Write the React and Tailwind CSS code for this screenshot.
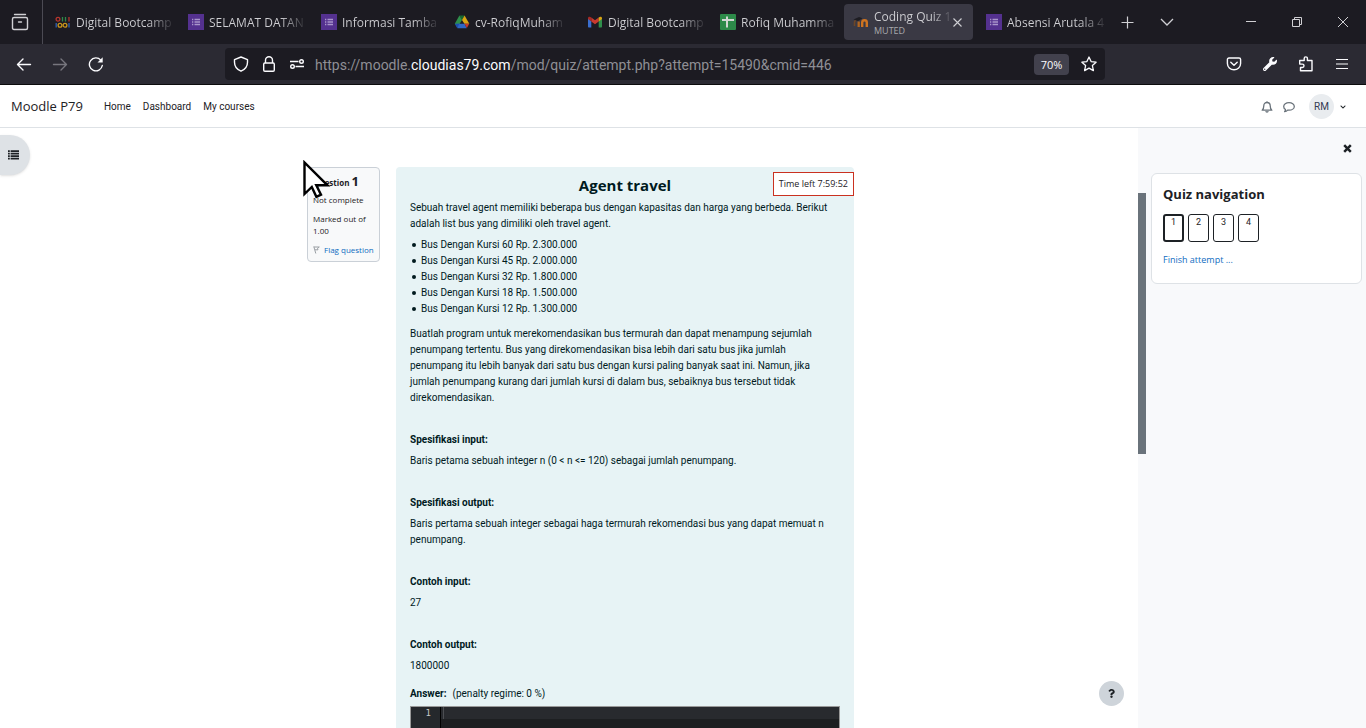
import React from "react";
import { FaWrench, FaQuestion, FaChevronDown } from "react-icons/fa";

const FormsIcon = () => (
  <svg width="16" height="16" viewBox="0 0 16 16" className="shrink-0">
    <rect width="16" height="16" fill="#54318f" />
    <path d="M6.500 5.500H12M6.500 8H12M6.500 10.500H12" stroke="#a995cb" strokeWidth="1.300" />
    <path d="M4 5.500h1.300M4 8h1.300M4 10.500h1.300" stroke="#a995cb" strokeWidth="1.300" />
  </svg>
);

const BootcampIcon = () => (
  <svg width="16" height="16" viewBox="0 0 16 16" fill="none" strokeWidth="1.300" className="shrink-0">
    <circle cx="3" cy="5.300" r="1.900" stroke="#b5362f" />
    <path d="M7.500 3v4.500M10.500 3v4.500" stroke="#2f8a4a" />
    <path d="M14 3v4.500" stroke="#b5362f" />
    <path d="M1.200 9v4.500" stroke="#2f62b5" />
    <circle cx="5" cy="11.200" r="1.900" stroke="#c8951c" />
    <circle cx="10" cy="11.200" r="1.900" stroke="#c8951c" />
    <path d="M14 9v4.500" stroke="#2f62b5" />
  </svg>
);

const DriveIcon = () => (
  <svg width="16" height="16" viewBox="0 0 16 16" className="shrink-0">
    <path d="M5.400 1.500h5.200L8 6z" fill="#17682f" />
    <path d="M5.400 1.500L.8 9.700l2.600 3.800L8 5.900z" fill="#2f8f4b" />
    <path d="M10.600 1.500L8 5.900l2.400 3.900h4.900z" fill="#d9a514" />
    <path d="M3.200 9.800h7.400l2.100 4.400H3.400z" fill="#2f66c4" />
    <path d="M.8 9.800h4.700l-2.400 4.300z" fill="#1c4fae" />
    <path d="M10.400 9.800h4.900l-2.400 4.300z" fill="#c2382d" />
  </svg>
);

const GmailIcon = () => (
  <svg width="16" height="16" viewBox="0 0 16 16" className="shrink-0">
    <path d="M1 4.500l3.300 2.500v6.500H2c-.6 0-1-.4-1-1z" fill="#3a6fd0" />
    <path d="M15 4.500L11.700 7v6.500H14c.6 0 1-.4 1-1z" fill="#2f8f4b" />
    <path d="M4.300 3.500L8 6.300l3.700-2.800V7.500L8 10.300 4.300 7.500z" fill="#c93a30" />
    <path d="M1 4.300C1 2.700 2.700 2.300 4.300 3.500v4L1 5z" fill="#a82a24" />
    <path d="M15 4.300c0-1.600-1.700-2-3.300-.8v4L15 5z" fill="#d9a514" />
  </svg>
);

const SheetsIcon = () => (
  <svg width="16" height="16" viewBox="0 0 16 16" className="shrink-0">
    <rect width="16" height="16" rx="1" fill="#2d8a49" />
    <path d="M2 6h12M7 2.500v11" stroke="#d2d6d3" strokeWidth="2" />
  </svg>
);

const MoodleIcon = () => (
  <svg width="16" height="16" viewBox="0 0 16 16" fill="none" className="shrink-0">
    <path d="M1.500 12V8.500c0-1.200.6-2 1.700-2" stroke="#6d4627" strokeWidth="1.600" />
    <path d="M5.700 13V7.500" stroke="#b0651f" strokeWidth="2.300" />
    <path d="M9.200 13V8.500c0-3 4.600-3 4.600 0V13" stroke="#cf7420" strokeWidth="2.400" />
    <path d="M.5 5.500L6 3l3.500 1.300L5 7z" fill="#1e1d22" />
  </svg>
);

const tabs = [
  { title: "Digital Bootcamp", Icon: BootcampIcon },
  { title: "SELAMAT DATAN", Icon: FormsIcon },
  { title: "Informasi Tamba", Icon: FormsIcon },
  { title: "cv-RofiqMuham", Icon: DriveIcon },
  { title: "Digital Bootcamp", Icon: GmailIcon },
  { title: "Rofiq Muhamma", Icon: SheetsIcon },
  { title: "Coding Quiz 1", Icon: MoodleIcon, active: true },
  { title: "Absensi Arutala 4", Icon: FormsIcon },
];

function Tab({ title, Icon, active }) {
  return (
    <div
      className={
        "flex h-9 w-[129px] shrink-0 items-center gap-[5px] rounded pl-[9px] " +
        (active ? "bg-[#3a3944] pr-[11px]" : "")
      }
    >
      <Icon />
      <button className="min-w-0 flex-1 whitespace-nowrap pt-[2px] text-left">
        <span className="block w-fit bg-linear-to-r from-[#d0d0d4] from-75% to-[#d0d0d420] bg-clip-text text-xs leading-4 text-transparent">
          {title}
        </span>
        {active && <span className="block pb-[2px] text-[9px] leading-[11px] text-[#a8a8ac]">MUTED</span>}
      </button>
      {active && (
        <button aria-label="Close tab" className="shrink-0 text-[#cfcfd4]">
          <svg width="9" height="9" viewBox="0 0 9 9" stroke="currentColor" strokeWidth="1.100">
            <path d="M.5.5l8 8M8.500.5l-8 8" />
          </svg>
        </button>
      )}
    </div>
  );
}

function TabBar() {
  return (
    <div className="flex h-11 shrink-0 items-center bg-[#1c1b22] text-[#d0d0d4]">
      <button aria-label="Recent browsing" className="flex h-11 w-[43px] shrink-0 items-center justify-center border-r border-[#4b4a53] pr-[2px]">
        <svg width="18" height="18" viewBox="0 0 18 18" fill="none" stroke="currentColor" strokeWidth="1.400">
          <path d="M3.500 1.500h11" strokeLinecap="round" />
          <path d="M3 4.500h12c1 0 1.500.5 1.500 1.500v9c0 1-.5 1.500-1.500 1.500H3c-1 0-1.500-.5-1.500-1.500V6c0-1 .5-1.500 1.500-1.500z" />
          <path d="M7.500 9h3" strokeLinecap="round" />
        </svg>
      </button>
      <div className="ml-[3px] flex gap-1">
        {tabs.map((t, i) => (
          <Tab key={i} {...t} />
        ))}
      </div>
      <button aria-label="New tab" className="ml-[11px] flex w-5 shrink-0 justify-center">
        <svg width="13" height="13" viewBox="0 0 13 13" stroke="currentColor" strokeWidth="1.200">
          <path d="M6.500.5v12M.5 6.500h12" />
        </svg>
      </button>
      <button aria-label="List all tabs" className="ml-5 flex w-5 shrink-0 justify-center">
        <svg width="14" height="14" viewBox="0 0 14 14" fill="none" stroke="currentColor" strokeWidth="1.300">
          <path d="M1 4l6 6 6-6" />
        </svg>
      </button>
      <div className="ml-auto flex items-center gap-9 pr-[18px]">
        <button aria-label="Minimize">
          <svg width="10" height="10" viewBox="0 0 10 10" stroke="currentColor"><path d="M0 4.500h10" /></svg>
        </button>
        <button aria-label="Restore">
          <svg width="10" height="10" viewBox="0 0 10 10" fill="none" stroke="currentColor"><path d="M.5 2.500h7v7h-7zM2.500 2.500v-2h7v7h-2" /></svg>
        </button>
        <button aria-label="Close window">
          <svg width="10" height="10" viewBox="0 0 10 10" stroke="currentColor"><path d="M0 0l10 10M10 0L0 10" /></svg>
        </button>
      </div>
    </div>
  );
}

function NavBar() {
  return (
    <div className="flex h-[41px] shrink-0 items-center border-b border-[#0c0c0d] bg-[#2b2a33] text-[#fbfbfe]">
      <div className="flex w-[225px] shrink-0 items-center gap-5 pl-4">
        <button aria-label="Back">
          <svg width="16" height="16" viewBox="0 0 16 16" fill="none" stroke="currentColor" strokeWidth="1.400" strokeLinecap="round" strokeLinejoin="round">
            <path d="M14.500 8.500H1.500M7 3L1.500 8.500 7 14" />
          </svg>
        </button>
        <button aria-label="Forward" className="text-[#77767e]">
          <svg width="16" height="16" viewBox="0 0 16 16" fill="none" stroke="currentColor" strokeWidth="1.400" strokeLinecap="round" strokeLinejoin="round">
            <path d="M1.500 8.500h13M9 3l5.500 5.500L9 14" />
          </svg>
        </button>
        <button aria-label="Reload">
          <svg width="16" height="16" viewBox="0 0 16 16" fill="none" stroke="currentColor" strokeWidth="1.400" strokeLinecap="round">
            <path d="M14.300 9.500A6.500 6.500 0 1 1 12.800 4.100" />
            <path d="M14.700 1.300v5.200H9.500z" fill="currentColor" stroke="none" />
          </svg>
        </button>
      </div>
      <div className="flex h-8 w-[880px] min-w-0 items-center rounded bg-[#1c1b22] pl-2 pr-2">
        <div className="flex shrink-0 items-center gap-3">
          <svg width="16" height="16" viewBox="0 0 16 16" fill="none" stroke="currentColor" strokeWidth="1.400" strokeLinejoin="round">
            <path d="M8 1l6.500 2.600v2.600c0 4-2.500 7.300-6.500 9-4-1.700-6.500-5-6.500-9V3.600z" />
          </svg>
          <svg width="16" height="16" viewBox="0 0 16 16" fill="none" stroke="currentColor" strokeWidth="1.400">
            <rect x="2.700" y="7" width="10.600" height="8.300" rx="1.200" />
            <path d="M4.500 7V4.200a3.500 3.500 0 0 1 7 0V7" />
          </svg>
          <svg width="16" height="16" viewBox="0 0 16 16" fill="none" stroke="currentColor" strokeWidth="1.400">
            <path d="M1 5.500h8.500M6.500 10.500H15" />
            <circle cx="12.500" cy="5.500" r="1.800" />
            <circle cx="3.500" cy="10.500" r="1.800" />
          </svg>
        </div>
        <div className="ml-[10px] min-w-0 flex-1 truncate pt-px font-['Roboto',sans-serif] text-sm text-[#8f8f95]">
          https://moodle.<span className="text-[#fbfbfe]">cloudias79.com</span>/mod/quiz/attempt.php?attempt=15490&amp;cmid=446
        </div>
        <button className="h-[21px] w-[35px] shrink-0 rounded-sm bg-[#42414d] text-[11px] leading-[21px]">70%</button>
        <button aria-label="Bookmark" className="ml-3 shrink-0">
          <svg width="16" height="16" viewBox="0 0 16 16" fill="none" stroke="currentColor" strokeWidth="1.300" strokeLinejoin="round">
            <path d="M8 1l2.100 4.600 5 .6-3.700 3.400 1 5L8 12.100l-4.400 2.500 1-5L.9 6.200l5-.6z" />
          </svg>
        </button>
      </div>
      <div className="ml-auto flex shrink-0 items-center gap-5 pr-4">
        <button aria-label="Save to Pocket">
          <svg width="16" height="16" viewBox="0 0 16 16" fill="none" stroke="currentColor" strokeWidth="1.400" strokeLinecap="round" strokeLinejoin="round">
            <path d="M3 2h10c1 0 1.600.6 1.600 1.600V7.500a6.600 6.300 0 0 1-13.200 0V3.600C1.400 2.600 2 2 3 2z" />
            <path d="M4.800 6.200L8 9.300l3.200-3.100" />
          </svg>
        </button>
        <button aria-label="Developer tools"><FaWrench size={14} className="mx-px" /></button>
        <button aria-label="Extensions">
          <svg width="16" height="16" viewBox="0 0 16 16" fill="none" stroke="currentColor" strokeWidth="1.400" strokeLinejoin="round">
            <path d="M2.500 14.800V11.500h1.800a1.500 1.500 0 0 0 0-3.400H1.700V4.500h4.500V2.500a1.600 1.600 0 0 1 3.200 0v2H14v10.300z" />
          </svg>
        </button>
        <button aria-label="Menu">
          <svg width="16" height="16" viewBox="0 0 16 16" stroke="currentColor" strokeWidth="1.200"><path d="M2 3.500h12M2 8h12M2 12.500h12" /></svg>
        </button>
      </div>
    </div>
  );
}

function SiteHeader() {
  return (
    <header className="flex h-[43px] shrink-0 items-center border-b border-[#dee2e6] bg-white px-[11px] pt-px text-[#1d2125]">
      <a href="#" className="font-['Open_Sans',sans-serif] text-[13px]">Moodle P79</a>
      <nav className="ml-[21px] flex gap-3 text-[10px]">
        <a href="#">Home</a>
        <a href="#">Dashboard</a>
        <a href="#">My courses</a>
      </nav>
      <div className="ml-auto flex items-center pr-[9px]">
        <button aria-label="Notifications">
          <svg width="12" height="12" viewBox="0 0 12 12" fill="none" stroke="#6a737b" strokeWidth="1.300" strokeLinejoin="round">
            <path d="M6 .3v1M1.200 9.200C2.500 8 2.800 6.800 2.800 4.800 2.800 2.700 4 1.500 6 1.500s3.200 1.200 3.200 3.300c0 2 .3 3.200 1.600 4.400z" />
            <path d="M4.800 10.200c.2 1.200 2.200 1.200 2.400 0" />
          </svg>
        </button>
        <button aria-label="Messages" className="ml-[10px]">
          <svg width="12" height="12" viewBox="0 0 12 12" fill="none" stroke="#6a737b" strokeWidth="1.300" strokeLinejoin="round">
            <path d="M6 1.700c3 0 5.300 1.600 5.300 3.700S9 9.200 6 9.200c-.5 0-1 0-1.400-.1C3.800 10 2.800 10.500 1.600 10.700c.6-.7.8-1.300.9-2.200C1.400 7.800.7 6.700.7 5.400.7 3.300 3 1.700 6 1.700z" />
          </svg>
        </button>
        <button className="ml-[14px] flex items-center gap-[6px] text-[10px]">
          <span className="flex size-[25px] items-center justify-center rounded-full bg-[#e9ecef] text-[#343a52]">RM</span>
          <FaChevronDown size={6} />
        </button>
      </div>
    </header>
  );
}

const buses = [
  "Bus Dengan Kursi 60 Rp. 2.300.000",
  "Bus Dengan Kursi 45 Rp. 2.000.000",
  "Bus Dengan Kursi 32 Rp. 1.800.000",
  "Bus Dengan Kursi 18 Rp. 1.500.000",
  "Bus Dengan Kursi 12 Rp. 1.300.000",
];

function Section({ title, children }) {
  return (
    <section className="mt-[26px]">
      <h4 className="font-bold">{title}</h4>
      <p className="mt-[5px]">{children}</p>
    </section>
  );
}

function Question() {
  return (
    <div className="relative min-w-0 flex-1 self-stretch rounded-t bg-[#e7f3f5] px-[14px] pt-2 text-[10px] leading-4 text-[#001a1e]">
      <div className="absolute right-0 top-[5px] border border-[#ca3120] bg-white px-[5px] font-['Open_Sans',sans-serif] text-[9px] leading-[22px] text-[#1d2125]">
        Time left 7:59:52
      </div>
      <h3 className="text-center font-['Open_Sans',sans-serif] text-[15px] font-bold leading-5">Agent travel</h3>
      <p className="mt-[5px]">
        Sebuah travel agent memiliki beberapa bus dengan kapasitas dan harga yang berbeda. Berikut adalah list bus yang dimiliki oleh travel agent.
      </p>
      <ul className="mt-[5px]">
        {buses.map((b) => (
          <li key={b} className="flex items-center gap-[5px] pl-[2px] before:size-1 before:rounded-full before:bg-[#001a1e]">{b}</li>
        ))}
      </ul>
      <p className="mt-[9px]">
        Buatlah program untuk merekomendasikan bus termurah dan dapat menampung sejumlah penumpang tertentu. Bus yang direkomendasikan bisa lebih dari satu bus jika jumlah penumpang itu lebih banyak dari satu bus dengan kursi paling banyak saat ini. Namun, jika jumlah penumpang kurang dari jumlah kursi di dalam bus, sebaiknya bus tersebut tidak direkomendasikan.
      </p>
      <Section title="Spesifikasi input:">Baris petama sebuah integer n (0 &lt; n &lt;= 120) sebagai jumlah penumpang.</Section>
      <Section title="Spesifikasi output:">Baris pertama sebuah integer sebagai haga termurah rekomendasi bus yang dapat memuat n penumpang.</Section>
      <Section title="Contoh input:">27</Section>
      <Section title="Contoh output:">1800000</Section>
      <div className="mt-3 flex gap-[6px]">
        <label htmlFor="answer" className="font-bold">Answer:</label>
        <span>(penalty regime: 0 %)</span>
      </div>
      <div className="mt-1 flex h-20 border border-[#999] bg-[#1d1f21] font-['DejaVu_Sans_Mono',monospace] text-[9px] leading-3">
        <div className="w-[29px] shrink-0 bg-[#25282c] pr-[9px] text-right text-[#c5c8c6]">1</div>
        <div className="relative flex min-w-0 flex-1 border-l border-black">
          <textarea
            id="answer"
            className="min-w-0 flex-1 resize-none bg-linear-to-b from-[#282a2e] from-[12px] to-transparent to-[12px] pl-1 text-[#c5c8c6] outline-none"
          />
          <span className="absolute left-[2px] top-0 h-3 w-px bg-[#4c4e52]" />
        </div>
      </div>
    </div>
  );
}

function QuestionInfo() {
  return (
    <div className="relative w-[73px] shrink-0 rounded-sm border border-[#cad0d7] bg-[#f8f9fa] px-[5px] pb-[5px] pt-1 font-['Open_Sans',sans-serif] text-[8px] leading-3 text-[#1d2125]">
      <h3 className="whitespace-nowrap font-bold leading-[18px]">
        Question <span className="text-[13px]">1</span>
      </h3>
      <div className="mt-[2px]">Not complete</div>
      <div className="mt-[7px]">Marked out of 1.00</div>
      <a href="#" className="mt-[7px] flex items-center gap-1 whitespace-nowrap text-[#0f6cbf]">
        <svg width="7" height="8" viewBox="0 0 7 8" fill="none" stroke="#9a9fa4">
          <path d="M.8.5l2 7M.8 1h5.500L4.500 2.300l.5 1.500H2" />
        </svg>
        Flag question
      </a>
      <svg width="28" height="40" viewBox="0 0 28 40" className="absolute -left-[5px] -top-2">
        <path d="M1.500 2.500v31.500l7.300-7 4.600 9.800 4.600-2.200-4.700-9.300h11.200z" fill="#fff" stroke="#000" strokeWidth="2.400" />
      </svg>
    </div>
  );
}

function Drawer() {
  return (
    <aside className="flex w-[228px] shrink-0 bg-[#f8f9fb]">
      <div className="w-2 shrink-0 pt-[65px]">
        <div className="h-[261px] bg-[#6a737b]" />
      </div>
      <div className="min-w-0 flex-1 pl-[5px] pr-1">
        <div className="flex h-[45px] items-center justify-end pb-[5px] pr-[10px]">
          <button aria-label="Close drawer">
            <svg width="9" height="9" viewBox="0 0 9 9" stroke="#1d2125" strokeWidth="2.500"><path d="M1.200 1.200l6.600 6.600M7.800 1.200L1.200 7.800" /></svg>
          </button>
        </div>
        <section className="rounded-md border border-[#dee2e6] bg-white px-[11px] pb-[15px] pt-[10px] text-[#1d2125]">
          <h2 className="font-['Open_Sans',sans-serif] text-[13px] font-bold leading-5">Quiz navigation</h2>
          <div className="mt-[10px] flex gap-1">
            {[1, 2, 3, 4].map((n) => (
              <a
                key={n}
                href="#"
                className={
                  "flex h-7 w-[21px] justify-center rounded-[3px] border-[#1d2125] text-[9px] " +
                  (n === 1 ? "border-2 leading-3" : "border leading-[14px]")
                }
              >
                {n}
              </a>
            ))}
          </div>
          <a href="#" className="mt-[10px] block font-['Open_Sans',sans-serif] text-[9px] leading-4 text-[#0f6cbf]">Finish attempt ...</a>
        </section>
      </div>
    </aside>
  );
}

export default function App() {
  return (
    <div className="flex h-screen flex-col overflow-hidden bg-white font-['Roboto','Open_Sans',sans-serif]">
      <div className="shrink-0 font-['Open_Sans','Noto_Sans',sans-serif]">
        <TabBar />
        <NavBar />
      </div>
      <SiteHeader />
      <div className="flex min-h-0 flex-1">
        <main className="relative min-w-0 flex-1 overflow-hidden pt-[39px]">
          <button aria-label="Open course index" className="absolute left-0 top-[7px] flex h-10 w-[30px] items-center rounded-r-full bg-[#dee2e6] pl-2 shadow-sm">
            <svg width="11" height="10" viewBox="0 0 11 10" stroke="#1d2125" strokeWidth="1.700">
              <path d="M0 1.200h1.800M0 3.700h1.800M0 6.200h1.800M0 8.700h1.800M2.600 1.200H11M2.600 3.700H11M2.600 6.200H11M2.600 8.700H11" />
            </svg>
          </button>
          <div className="mx-auto flex max-w-[570px] items-start gap-4 pl-[23px]">
            <QuestionInfo />
            <Question />
          </div>
          <button aria-label="Help" className="absolute bottom-[22px] right-[14px] flex size-[25px] items-center justify-center rounded-full bg-[#ced4da]">
            <FaQuestion size={9} color="#1d2125" />
          </button>
        </main>
        <Drawer />
      </div>
    </div>
  );
}
